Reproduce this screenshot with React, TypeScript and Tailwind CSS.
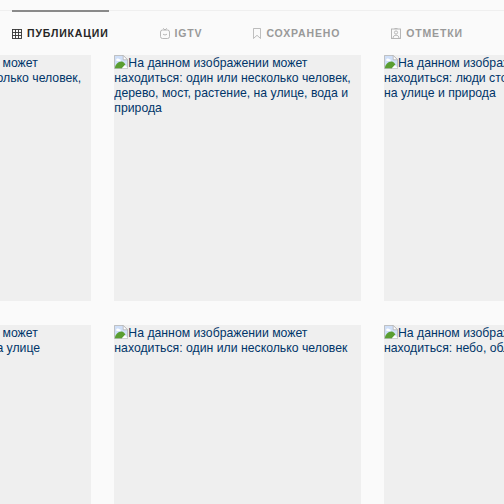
import React from "react";

function GridIcon() {
  return (
    <svg width="10" height="10" viewBox="0 0 10 10" fill="none" stroke="#333" strokeWidth="0.9">
      <rect x="0.5" y="0.5" width="9" height="9" />
      <path d="M3.500 0.500v9M6.500 0.500v9M0.500 3.500h9M0.500 6.500h9" />
    </svg>
  );
}

function TvIcon() {
  return (
    <svg width="10" height="11" viewBox="0 0 10 11" fill="none" stroke="#b0b0b0" strokeWidth="0.9">
      <rect x="0.5" y="2" width="9" height="8.500" rx="2" />
      <path d="M3.200 0.300l1.800 1.700 1.800-1.700M3 6l1 .8h2l1-.8" />
    </svg>
  );
}

function BookmarkIcon() {
  return (
    <svg width="8" height="11" viewBox="0 0 9 11" fill="none" stroke="#b0b0b0" strokeWidth="0.9" preserveAspectRatio="none">
      <path d="M0.500 0.500h8v10l-4-3.200-4 3.200z" />
    </svg>
  );
}

function TagIcon() {
  return (
    <svg width="10" height="11" viewBox="0 0 10 11" fill="none" stroke="#b0b0b0" strokeWidth="0.9">
      <rect x="0.500" y="1" width="9" height="9.500" />
      <circle cx="5" cy="4.500" r="1.600" />
      <path d="M2 10.500c0-2.500 1.500-3.300 3-3.300s3 .8 3 3.300M3.500 0.400h3" />
    </svg>
  );
}

function BrokenImage() {
  return (
    <svg width="14" height="14" viewBox="0 0 16 16" className="inline-block align-[-2px]">
      <path d="M0.500 0.500h10l5 5v10h-15z" fill="#cfdff8" stroke="#b8b8b8" />
      <path d="M10.500 0.500v5h5z" fill="#fff" stroke="#b8b8b8" />
      <path d="M2.500 5.500c0-1.600 3-1.900 3.800-.7 1.500-.2 2.200 1.500.7 2H3.200c-.5 0-.7-.8-.7-1.300z" fill="#fff" />
      <path d="M1 15c.5-4 3.500-7.500 7.500-7.500 2.500 0 4 2.500 4.500 3.500l-4 4z" fill="#5a9e32" />
      <path d="M9 15l3.500-3.500 3 3v.5z" fill="#fff" />
    </svg>
  );
}

const tabs = [
  { label: "Публикации", icon: <GridIcon />, active: true },
  { label: "IGTV", icon: <TvIcon /> },
  { label: "Сохранено", icon: <BookmarkIcon /> },
  { label: "Отметки", icon: <TagIcon /> },
];

const rows = [
  [
    "На данном изображении может находиться: один или несколько человек, на улице и природа",
    "На данном изображении может находиться: один или несколько человек, дерево, мост, растение, на улице, вода и природа",
    "На данном изображении может находиться: люди стоят, небо, облако, лес, на улице и природа",
  ],
  [
    "На данном изображении может находиться: небо, трава, на улице",
    "На данном изображении может находиться: один или несколько человек",
    "На данном изображении может находиться: небо, облако, на улице",
  ],
];

export default function App() {
  return (
    <div className="h-[504px] w-[504px] overflow-hidden bg-[#fafafa] pt-[10px] font-['Liberation_Sans',Arial,sans-serif]">
      <div className="flex h-[45px] gap-[51px] border-t border-[#efefef] pl-[12px]">
        {tabs.map((tab) => (
          <div
            key={tab.label}
            className={
              tab.active
                ? "-mt-px flex items-center gap-[5px] border-t-2 border-[#8a8a8a] text-[#262626]"
                : "-mt-px flex items-center gap-[5px] pt-[2px] text-[#999999]"
            }
          >
            {tab.icon}
            <span className="text-[10.5px] leading-none font-bold tracking-[0.85px] uppercase">
              {tab.label}
            </span>
          </div>
        ))}
      </div>
      <div className="-ml-[155.33px] flex w-[786px] flex-col gap-[23.33px]">
        {rows.map((row, i) => (
          <div key={i} className="grid grid-cols-[246.33px_246.33px_246.33px] gap-[23.33px]">
            {row.map((alt, j) => (
              <div
                key={j}
                className="h-[246.33px] overflow-hidden bg-[#efefef] text-[12.25px] leading-[15px] text-[#003569]"
              >
                <BrokenImage />
                {alt}
              </div>
            ))}
          </div>
        ))}
      </div>
    </div>
  );
}
